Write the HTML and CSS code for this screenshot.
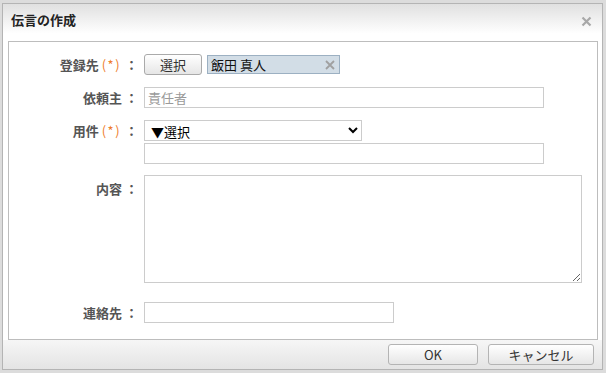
FILE: index.html
```html
<!DOCTYPE html>
<html lang="ja">
<head>
    <meta charset="UTF-8">
    <title>伝言の作成</title>
    <link rel="stylesheet" href="styles.css">
</head>
<body>
    <div class="dialog">
        <div class="dialog-head">
            <span class="dialog-title">伝言の作成</span>
            <svg class="close" width="11" height="11" viewBox="0 0 11 11">
                <path d="M1.5 1.5 L9.5 9.5 M9.5 1.5 L1.5 9.5" stroke="#a8a8a8" stroke-width="2.2"/>
            </svg>
        </div>

        <div class="dialog-body">
            <div class="row">
                <label class="label">登録先<span class="req">(*)</span> ：</label>
                <div class="field picker">
                    <button class="btn btn-pick">選択</button>
                    <span class="chip">飯田 真人
                        <svg class="chip-x" width="10" height="10" viewBox="0 0 10 10">
                            <path d="M1 1 L9 9 M9 1 L1 9" stroke="#a0a0a0" stroke-width="1.8"/>
                        </svg>
                    </span>
                </div>
            </div>

            <div class="row row-client">
                <label class="label">依頼主 ：</label>
                <div class="field">
                    <input class="text w-400" type="text" placeholder="責任者">
                </div>
            </div>

            <div class="row row-subject">
                <label class="label">用件<span class="req">(*)</span> ：</label>
                <div class="field stack">
                    <select class="select">
                        <option>▼選択</option>
                    </select>
                    <input class="text w-400" type="text">
                </div>
            </div>

            <div class="row row-body">
                <label class="label label-area">内容 ：</label>
                <div class="field">
                    <textarea class="area"></textarea>
                </div>
            </div>

            <div class="row row-contact">
                <label class="label">連絡先 ：</label>
                <div class="field">
                    <input class="text w-250" type="text">
                </div>
            </div>
        </div>

        <div class="dialog-foot">
            <button class="btn btn-ok">OK</button>
            <button class="btn btn-cancel">キャンセル</button>
        </div>
    </div>
</body>
</html>
```

FILE: styles.css
```css
* {box-sizing: border-box;}
body {
    margin: 0;
    padding: 3px 3px 3px 2px;
    background: #dcdcdc;
    font-family: "Noto Sans CJK JP", "Noto Sans", sans-serif;
    font-size: 13px;
    color: #333;
}
.dialog {
    width: 601px;
    height: 367px;
    border: 1px solid #b4b4b4;
    background: #fff;
    display: flex;
    flex-direction: column;
}
.dialog-head {
    height: 37px;
    display: flex;
    align-items: center;
    justify-content: space-between;
    padding: 0 10px 5px 8px;
    background: linear-gradient(#e0e0e0, #fff 80%);
}
.dialog-title {font-weight: bold; color: #222; line-height: 18px;}
.close {display: block; margin-top: 2px;}

.dialog-body {
    height: 299px;
    margin: 0 4px 0 5px;
    border: 1px solid #bdbdbd;
    padding-top: 12px;
}
.row {display: flex; align-items: flex-start; column-gap: 6px;}
.row-client, .row-subject {margin-top: 12px;}
.row-body {margin-top: 11px;}
.row-contact {margin-top: 19px;}
.label {
    width: 129px;
    flex-shrink: 0;
    text-align: right;
    font-weight: bold;
    color: #555;
    line-height: 21px;
}
.label-area {padding-top: 3px;}
.req {
    color: #ee7d2c;
    font-weight: normal;
    margin: 0 1px 0 3px;
    letter-spacing: 1.5px;
}
.field {display: flex;}
.picker {align-items: center; gap: 5px; height: 21px;}
.stack {flex-direction: column; gap: 2px;}

.btn {
    font-family: inherit;
    font-size: 13px;
    color: #333;
    height: 21px;
    padding: 0;
    line-height: 19px;
    border: 1px solid #aaa;
    border-radius: 3px;
    background: linear-gradient(#fff, #e6e6e6);
}
.btn-pick {width: 58px;}
.chip {
    width: 133px;
    height: 19px;
    display: flex;
    align-items: center;
    justify-content: space-between;
    padding: 0 4px 0 3px;
    background: #d2dde6;
    border: 1px solid #9cb0c2;
    color: #111;
    line-height: 17px;
}
.text {
    height: 21px;
    border: 1px solid #ccc;
    font-family: inherit;
    font-size: 13px;
    padding: 0 3px;
    outline: none;
}
.text::placeholder {color: #9a9a9a;}
.w-400 {width: 400px;}
.w-250 {width: 250px;}
.select {
    width: 218px;
    height: 21px;
    border: 1px solid #ccc;
    border-radius: 0;
    background: #fff;
    font-family: inherit;
    font-size: 13px;
    color: #000;
    padding: 0 2px;
}
.area {
    width: 438px;
    height: 108px;
    border: 1px solid #ccc;
    resize: both;
    outline: none;
}

.dialog-foot {
    flex: 1;
    display: flex;
    justify-content: flex-end;
    gap: 10px;
    padding: 4px 8px 0 0;
    background: linear-gradient(#f6f6f6, #e4e4e4);
}
.btn-ok {width: 90px; border-color: #b4b4b4;}
.btn-cancel {width: 106px; border-color: #b4b4b4;}
```
